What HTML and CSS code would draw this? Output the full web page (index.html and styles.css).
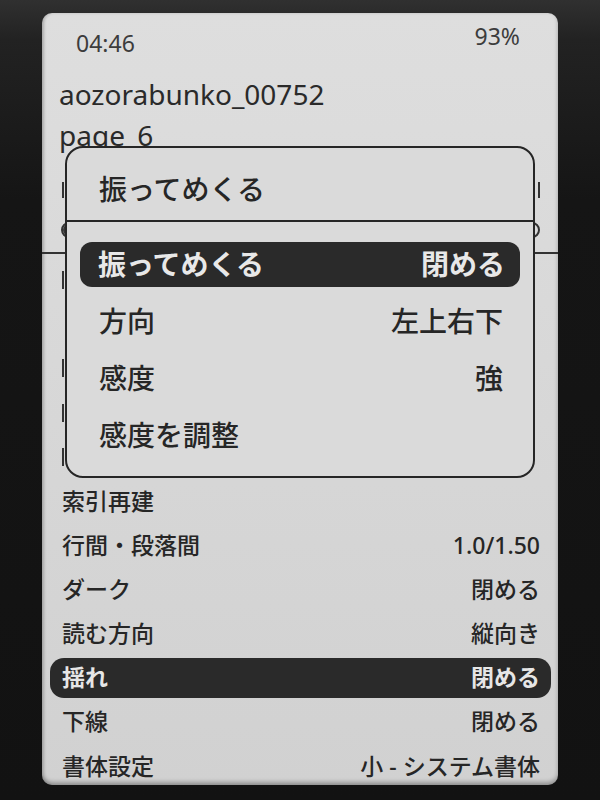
FILE: index.html
```html
<!DOCTYPE html>
<html lang="ja">
<head>
<meta charset="utf-8">
<title>aozorabunko_00752</title>
<link rel="stylesheet" href="styles.css">
</head>
<body>
<div class="device">
  <div class="screen">
    <div class="status">
      <span class="clock">04:46</span>
      <span class="battery">93%</span>
    </div>

    <div class="book">
      <div class="book-line">aozorabunko_00752</div>
      <div class="book-line">page_6</div>
    </div>

    <div class="chapter">
      <span class="chapter-mark"></span>
      <span class="chapter-mark"></span>
    </div>
    <div class="progress"><div class="progress-fill" style="width:24%"></div></div>
    <div class="rule"></div>

    <ul class="menu">
      <li class="menu-row menu-row--under"><span class="edge"></span></li>
      <li class="menu-row menu-row--under"></li>
      <li class="menu-row menu-row--under"><span class="edge"></span></li>
      <li class="menu-row menu-row--under"><span class="edge"></span></li>
      <li class="menu-row menu-row--under"><span class="edge"></span></li>
      <li class="menu-row"><span>索引再建</span><span></span></li>
      <li class="menu-row"><span>行間・段落間</span><span>1.0/1.50</span></li>
      <li class="menu-row"><span>ダーク</span><span>閉める</span></li>
      <li class="menu-row"><span>読む方向</span><span>縦向き</span></li>
      <li class="menu-row is-active"><span>揺れ</span><span>閉める</span></li>
      <li class="menu-row"><span>下線</span><span>閉める</span></li>
      <li class="menu-row"><span>書体設定</span><span>小 - システム書体</span></li>
    </ul>

    <div class="dialog">
      <div class="dialog-head">振ってめくる</div>
      <ul class="dialog-list">
        <li class="dialog-row is-active"><span>振ってめくる</span><span>閉める</span></li>
        <li class="dialog-row"><span>方向</span><span>左上右下</span></li>
        <li class="dialog-row"><span>感度</span><span>強</span></li>
        <li class="dialog-row"><span>感度を調整</span><span></span></li>
      </ul>
    </div>
  </div>
</div>
</body>
</html>
```

FILE: styles.css
```css
* {
  box-sizing: border-box;
}

html, body {
  margin: 0;
  padding: 0;
}

body {
  width: 600px;
  height: 800px;
  overflow: hidden;
  background: linear-gradient(180deg, #303030 0px, #222 40px, #151515 200px, #121212 100%);
  font-family: "Noto Sans", "Noto Sans CJK JP", sans-serif;
  color: #262626;
}

/* bezel around the e-ink panel */
.device {
  width: 600px;
  height: 800px;
  padding: 13px 42px 15px 42px;
}

.screen {
  position: relative;
  width: 516px;
  height: 772px;
  border-radius: 10px;
  overflow: hidden;
  background: linear-gradient(180deg, #dedede 0%, #d8d8d8 45%, #d1d1d1 100%);
  box-shadow: inset 0 -3px 4px rgba(0, 0, 0, 0.28), inset 2px 0 3px rgba(0, 0, 0, 0.12);
}

/* top status line */
.status {
  display: flex;
  justify-content: space-between;
  align-items: flex-start;
  height: 42px;
  padding: 0 38px 0 34px;
  font-size: 23px;
  line-height: 23px;
  color: #3c3c3c;
}

.clock {
  margin-top: 19px;
}

.battery {
  margin-top: 12px;
}

/* book heading */
.book {
  margin-top: 18.6px;
  padding-left: 17px;
  font-size: 28px;
  line-height: 41px;
  color: #2a2a2a;
}

/* chapter line, mostly under the popup */
.chapter {
  display: flex;
  justify-content: space-between;
  align-items: center;
  height: 30px;
  margin-top: 19.4px;
  padding: 0 18px 0 20px;
}

.chapter-mark {
  width: 22px;
  height: 16px;
  border-left: 2px solid #333;
  border-right: 2px solid #333;
}

.progress {
  height: 16px;
  margin: 17px 18px 0 19px;
  border: 2px solid #333;
  border-radius: 8px;
  overflow: hidden;
}

.progress-fill {
  height: 100%;
  background: #333;
}

.rule {
  height: 2px;
  margin-top: 14px;
  background: #333;
}

/* settings list */
.menu {
  list-style: none;
  margin: 0;
  padding: 4px 0 0;
}

.menu-row {
  display: flex;
  justify-content: space-between;
  align-items: center;
  height: 44.2px;
  padding: 0 18px 0 20px;
  font-size: 23px;
  line-height: 1;
  font-weight: 500;
  color: #262626;
  white-space: nowrap;
}

/* rows that sit below the popup */
.edge {
  display: block;
  width: 20px;
  height: 18px;
  border-left: 2px solid #333;
}

.menu-row.is-active {
  height: 40.2px;
  margin: 2px 7px 2px 8px;
  padding: 0 11px 0 12px;
  border-radius: 14px;
  background: #2a2a2a;
  color: #e6e6e6;
  font-weight: 700;
}

/* popup over the list */
.dialog {
  position: absolute;
  left: 23px;
  top: 133px;
  width: 470px;
  height: 332px;
  border: 2px solid #262626;
  border-radius: 18px;
  background: #dadada;
}

.dialog-head {
  height: 74px;
  padding: 22px 30px 12px 32px;
  border-bottom: 2px solid #262626;
  font-size: 28px;
  line-height: 38px;
  font-weight: 500;
  color: #262626;
}

.dialog-list {
  list-style: none;
  margin: 0;
  padding: 13.5px 0 12.5px;
}

.dialog-row {
  display: flex;
  justify-content: space-between;
  align-items: center;
  height: 57px;
  padding: 0 30px 0 32px;
  font-size: 28px;
  line-height: 1;
  font-weight: 500;
  color: #262626;
  white-space: nowrap;
}

.dialog-row.is-active {
  height: 45px;
  margin: 6px 13px;
  padding: 0 15px 0 18px;
  border-radius: 12px;
  background: #2a2a2a;
  color: #e8e8e8;
  font-weight: 700;
}
```
